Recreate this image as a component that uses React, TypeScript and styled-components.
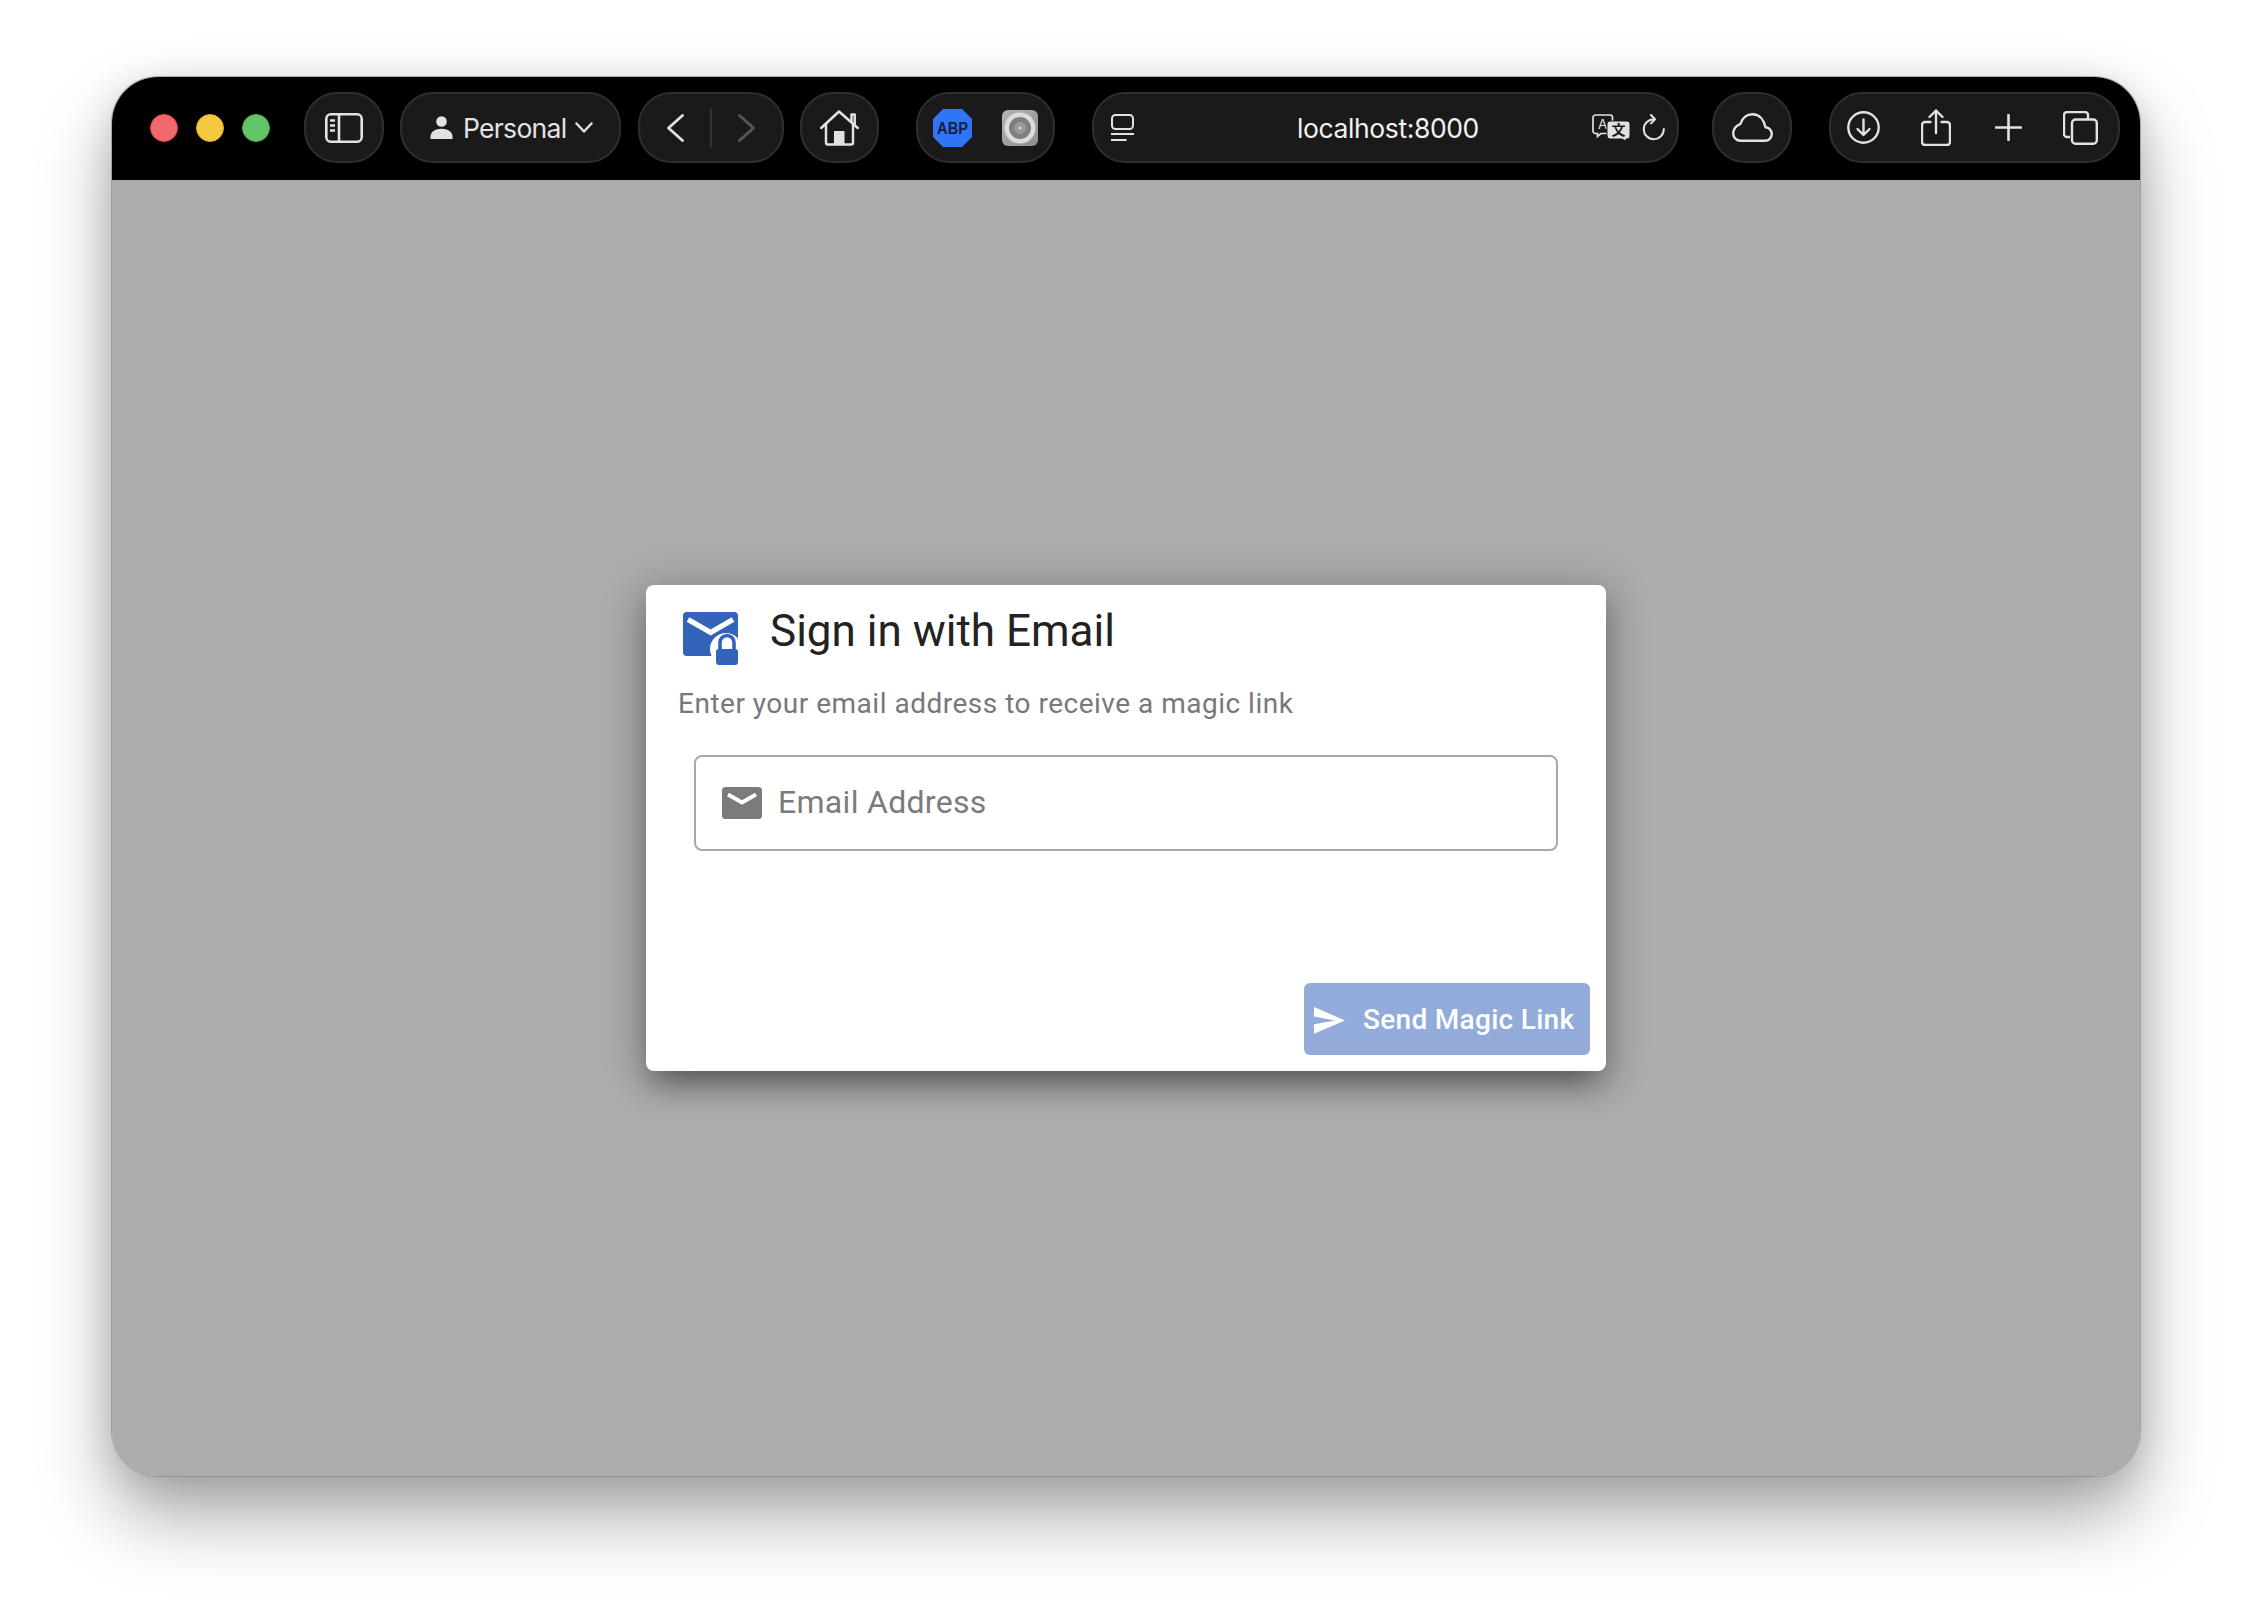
import React from "react";
import styled, { createGlobalStyle } from "styled-components";

const Global = createGlobalStyle`
  html, body { margin: 0; padding: 0; background: #fff; }
  * { box-sizing: border-box; }
`;

const Stage = styled.div`
  width: 2252px;
  height: 1624px;
  padding: 77px 112px 148px;
  background: #fff;
  overflow: hidden;
`;

const Win = styled.div`
  width: 2028px;
  height: 1399px;
  display: flex;
  flex-direction: column;
  border-radius: 46px;
  overflow: hidden;
  box-shadow: 0 0 0 1px rgba(130, 130, 130, 0.6), 0 40px 72px rgba(0, 0, 0, 0.34), 0 4px 36px rgba(0, 0, 0, 0.12);
`;

const Toolbar = styled.header`
  flex: none;
  height: 103px;
  background: #000;
  display: flex;
  align-items: center;
  padding: 0 0 2px 38px;
`;

const Lights = styled.div`
  display: flex;
  gap: 18px;
  margin: 1px 34px 0 0;
`;

const Light = styled.span<{ $fill: string; $edge: string }>`
  width: 28px;
  height: 28px;
  border-radius: 50%;
  background: ${(p) => p.$fill};
  border: 1px solid ${(p) => p.$edge};
`;

const Pill = styled.div<{ $w: number; $before?: number; $pad?: string; $center?: boolean; $gap?: number }>`
  flex: none;
  width: ${(p) => p.$w}px;
  height: 71px;
  margin-left: ${(p) => p.$before ?? 0}px;
  padding: ${(p) => p.$pad ?? "0"};
  display: flex;
  align-items: center;
  gap: ${(p) => p.$gap ?? 0}px;
  justify-content: ${(p) => (p.$center ? "center" : "flex-start")};
  background: #1a1a1a;
  border: 2px solid #2f2f2f;
  border-radius: 33px;
`;

const AddressPill = styled(Pill)`
  display: grid;
  grid-template-columns: 1fr auto 1fr;
`;

const Trailing = styled.div`
  display: flex;
  align-items: center;
  justify-content: flex-end;
  gap: 12px;
`;

const ToolLabel = styled.span`
  font: 400 26.5px/1 "Inter", "Liberation Sans", sans-serif;
  letter-spacing: -0.7px;
  color: #e4e4e4;
  margin: 2px 9px 0 10px;
`;

const Url = styled.span`
  font: 400 26.5px/1 "Inter", "Liberation Sans", sans-serif;
  letter-spacing: -0.4px;
  color: #f2f2f2;
  margin-top: 2px;
`;

const NavDivider = styled.span`
  width: 2px;
  height: 40px;
  margin: 0 26px;
  background: #333;
`;

const Spread = styled.div`
  flex: 1;
  display: flex;
  align-items: center;
  justify-content: space-between;
`;

const ShareSlot = styled.span`
  display: flex;
  margin-right: 3px;
`;

const Content = styled.main`
  flex: 1;
  background: #acacac;
  display: flex;
  align-items: center;
  justify-content: center;
`;

const Card = styled.section`
  width: 960px;
  height: 486px;
  display: flex;
  flex-direction: column;
  background: #fff;
  border-radius: 8px;
  box-shadow: 0 20px 26px -14px rgba(0, 0, 0, 0.32), 0 14px 32px 2px rgba(0, 0, 0, 0.2), 0 4px 44px 6px rgba(0, 0, 0, 0.14);
`;

const TitleRow = styled.div`
  display: flex;
  align-items: flex-start;
  padding: 27px 0 0 37px;
  gap: 31px;
  height: 86px;
`;

const Title = styled.h2`
  margin: -10px 0 0;
  font: 400 44px/58px "Roboto", sans-serif;
  color: #222;
`;

const Subtitle = styled.p`
  margin: 13px 0 0 32px;
  font: 400 28px/40px "Roboto", sans-serif;
  letter-spacing: 0.5px;
  color: #787878;
`;

const InputBox = styled.div`
  margin: 31px 48px 0 48px;
  height: 96px;
  display: flex;
  align-items: center;
  gap: 16px;
  padding-left: 26px;
  border: 2px solid #a8a8a8;
  border-radius: 8px;
`;

const Placeholder = styled.span`
  font: 400 32px/1 "Roboto", sans-serif;
  letter-spacing: 0.3px;
  color: #7b7b7b;
  margin-top: -2px;
`;

const Footer = styled.div`
  margin-top: auto;
  padding: 0 16px 16px 0;
  display: flex;
  justify-content: flex-end;
`;

const SendButton = styled.button`
  width: 286px;
  height: 72px;
  padding: 2px 0 0 10px;
  display: flex;
  align-items: center;
  gap: 18px;
  border: 0;
  border-radius: 6px;
  background: #92abdb;
  color: #fff;
  font: 500 28px/1 "Roboto", sans-serif;
  letter-spacing: 0.3px;
`;

const ic = "#e2e2e2";

const SidebarIcon = () => (
  <svg width="38" height="30" viewBox="0 0 38 30" fill="none" stroke={ic} strokeWidth="2.6">
    <rect x="1.3" y="1.3" width="35.4" height="27.4" rx="4.5" />
    <path d="M14 1.5v27" />
    <path d="M5 7.5h5M5 12.5h5M5 17.5h5" strokeWidth="2.4" />
  </svg>
);

const PersonIcon = () => (
  <svg width="23" height="23" viewBox="0 0 23 23" fill={ic}>
    <circle cx="11.5" cy="5.5" r="5.3" />
    <path d="M0.5 23v-2.5C0.5 16 5 12.7 11.5 12.7S22.5 16 22.5 20.5V23z" />
  </svg>
);

const Chevron = () => (
  <svg width="18" height="11" viewBox="0 0 18 11" fill="none" stroke={ic} strokeWidth="2.4" strokeLinecap="round" strokeLinejoin="round">
    <path d="M1.5 1.5 9 9.5l7.5-8" />
  </svg>
);

const NavArrow = ({ dir, color }: { dir: "l" | "r"; color: string }) => (
  <svg width="17" height="28" viewBox="0 0 17 28" fill="none" stroke={color} strokeWidth="2.8" strokeLinecap="round" strokeLinejoin="round">
    <path d={dir === "l" ? "M15.5 1.5 1.5 14l14 12.5" : "M1.5 1.5 15.5 14 1.5 26.5"} />
  </svg>
);

const HomeIcon = () => (
  <svg width="39" height="36" viewBox="0 0 39 36" fill="none" stroke={ic} strokeWidth="2.5" strokeLinecap="round" strokeLinejoin="round">
    <path d="M1.2 18 19 1.5 37.8 18" />
    <path d="M31.5 12V4.5h3.2V15" />
    <path d="M6 14.5V32.5a2 2 0 0 0 2 2h23a2 2 0 0 0 2-2V14.5" />
    <rect x="14" y="21" width="10.5" height="13.5" fill={ic} stroke="none" />
  </svg>
);

const AbpIcon = () => (
  <svg width="39" height="38" viewBox="0 0 39 38">
    <path d="M10 0h19l10 10v18L29 38H10L0 28V10z" fill="#2f75f5" />
    <text transform="translate(19.5 25) scale(0.86 1)" textAnchor="middle" fontFamily="'Liberation Sans', sans-serif" fontWeight="700" fontSize="17" fill="#14213f">ABP</text>
  </svg>
);

const LensIcon = () => (
  <svg width="36" height="36" viewBox="0 0 36 36">
    <defs>
      <linearGradient id="lensEdge" x1="0" y1="0" x2="1" y2="1">
        <stop offset="0" stopColor="#b4b4b4" />
        <stop offset="1" stopColor="#8e8e8e" />
      </linearGradient>
    </defs>
    <rect width="36" height="36" rx="6" fill="url(#lensEdge)" />
    <circle cx="18" cy="18" r="15.5" fill="#dcdcdc" />
    <circle cx="18" cy="18" r="11" fill="#7f7f7f" />
    <circle cx="18" cy="18" r="6" fill="#9a9a9a" />
    <circle cx="18" cy="18" r="1.5" fill="#d8d8d8" />
  </svg>
);

const ReaderIcon = () => (
  <svg width="23" height="27" viewBox="0 0 23 27" fill="none" stroke={ic} strokeWidth="2">
    <rect x="1" y="1" width="21" height="14" rx="3.5" />
    <path d="M0 20h23" />
    <path d="M0 26h15.5" />
  </svg>
);

const TranslateIcon = () => (
  <svg width="38" height="27" viewBox="0 0 38 27">
    <path d="M3.5 1h14.5a2.5 2.5 0 0 1 2.5 2.5V17a2.5 2.5 0 0 1-2.5 2.5H9L5.5 22.5V19.5h-2A2.5 2.5 0 0 1 1 17V3.5A2.5 2.5 0 0 1 3.5 1z" fill="none" stroke={ic} strokeWidth="1.7" />
    <text x="10.7" y="15" textAnchor="middle" fontFamily="Inter, sans-serif" fontSize="13.5" fill={ic}>A</text>
    <path d="M18 7h17a3 3 0 0 1 3 3v12a3 3 0 0 1-3 3h-1v2l-4-2H18a3 3 0 0 1-3-3V10a3 3 0 0 1 3-3z" fill={ic} stroke="#1a1a1a" strokeWidth="1" />
    <text x="26.5" y="21" textAnchor="middle" fontFamily="'Noto Sans CJK SC', sans-serif" fontSize="14" fontWeight="700" fill="#1a1a1a">文</text>
  </svg>
);

const ReloadIcon = () => (
  <svg width="23" height="27" viewBox="0 0 23 27" fill="none" stroke={ic} strokeWidth="2" strokeLinecap="round" strokeLinejoin="round">
    <path d="M12 5.2A10 10 0 1 0 21.8 15" />
    <path d="M9 1l4 4.2-4 4.2" />
  </svg>
);

const CloudIcon = () => (
  <svg width="41" height="29" viewBox="0 0 41 29" fill="none" stroke={ic} strokeWidth="2.4" strokeLinejoin="round">
    <path d="M8.5 27.8H33a6.8 6.8 0 0 0 6.8-6.8c0-3.6-2.8-6.4-6.3-6.7C32 7 27.5 1.2 20.5 1.2c-6 0-10.5 4-12 9.6C4.5 12.5 1.2 16 1.2 20.5c0 4 3.3 7.3 7.3 7.3z" />
  </svg>
);

const DownloadIcon = () => (
  <svg width="33" height="33" viewBox="0 0 33 33" fill="none" stroke={ic} strokeWidth="2.4" strokeLinecap="round" strokeLinejoin="round">
    <circle cx="16.5" cy="16.5" r="15.2" />
    <path d="M16.5 8.5v15M10.5 18l6 6 6-6" />
  </svg>
);

const ShareIcon = () => (
  <svg width="30" height="37" viewBox="0 0 30 37" fill="none" stroke={ic} strokeWidth="2.4" strokeLinecap="round" strokeLinejoin="round">
    <path d="M9.5 13H4a3 3 0 0 0-3 3v17a3 3 0 0 0 3 3h22a3 3 0 0 0 3-3V16a3 3 0 0 0-3-3h-5.5" />
    <path d="M15 24V1.5M8.5 8 15 1.5 21.5 8" />
  </svg>
);

const PlusIcon = () => (
  <svg width="27" height="27" viewBox="0 0 27 27" fill="none" stroke={ic} strokeWidth="2.6" strokeLinecap="round">
    <path d="M13.5 1v25M1 13.5h25" />
  </svg>
);

const TabsIcon = () => (
  <svg width="35" height="34" viewBox="0 0 35 34" fill="none" stroke={ic} strokeWidth="2.4" strokeLinejoin="round">
    <path d="M7 26H4a3 3 0 0 1-3-3V4a3 3 0 0 1 3-3h18a3 3 0 0 1 3 3v4" />
    <rect x="9" y="8.5" width="24.8" height="24.3" rx="3.5" />
  </svg>
);

const MailLockIcon = () => (
  <svg width="56" height="53" viewBox="0 0 56 53">
    <rect x="0" y="0" width="55" height="44" rx="4" fill="#3264ba" />
    <path d="M5 7.5 27.7 20.5 50 7.5" fill="none" stroke="#fff" strokeWidth="5.4" />
    <circle cx="43" cy="37" r="16" fill="#fff" />
    <rect x="38" y="44" width="18" height="9" fill="#fff" />
    <path d="M37 38v-7.5a7 7 0 0 1 14 0V38" fill="none" stroke="#3264ba" strokeWidth="3.6" />
    <rect x="33" y="37" width="22" height="16" rx="3" fill="#3264ba" />
  </svg>
);

const MailIcon = () => (
  <svg width="40" height="32" viewBox="0 0 40 32">
    <rect width="40" height="32" rx="3.5" fill="#7b7b7b" />
    <path d="M6 7.5 20 15.5 34 7.5" fill="none" stroke="#fff" strokeWidth="4" />
  </svg>
);

const SendIcon = () => (
  <svg width="31" height="27" viewBox="0 0 31 27" fill="#fff">
    <path d="M0 0 31 13.4 0 26.7V17.3L21 13.4 0 9.4z" />
  </svg>
);

export default function App() {
  return (
    <Stage>
      <Global />
      <Win>
        <Toolbar>
          <Lights>
            <Light $fill="#f1696d" $edge="#d9474c" />
            <Light $fill="#f4c83f" $edge="#dca92c" />
            <Light $fill="#62c667" $edge="#4aab50" />
          </Lights>
          <Pill $w={80} $center>
            <SidebarIcon />
          </Pill>
          <Pill $w={221} $before={16} $pad="0 0 0 28px">
            <PersonIcon />
            <ToolLabel>Personal</ToolLabel>
            <Chevron />
          </Pill>
          <Pill $w={146} $before={17} $pad="0 0 0 27px">
            <NavArrow dir="l" color={ic} />
            <NavDivider />
            <NavArrow dir="r" color="#575757" />
          </Pill>
          <Pill $w={79} $before={16} $center>
            <HomeIcon />
          </Pill>
          <Pill $w={139} $before={37} $pad="0 0 0 15px" $gap={30}>
            <AbpIcon />
            <LensIcon />
          </Pill>
          <AddressPill $w={587} $before={37} $pad="0 12px 0 17px">
            <ReaderIcon />
            <Url>localhost:8000</Url>
            <Trailing>
              <TranslateIcon />
              <ReloadIcon />
            </Trailing>
          </AddressPill>
          <Pill $w={80} $before={33} $center>
            <CloudIcon />
          </Pill>
          <Pill $w={291} $before={37} $pad="0 20px 0 16px">
            <Spread>
              <DownloadIcon />
              <ShareSlot>
                <ShareIcon />
              </ShareSlot>
              <PlusIcon />
              <TabsIcon />
            </Spread>
          </Pill>
        </Toolbar>
        <Content>
          <Card>
            <TitleRow>
              <MailLockIcon />
              <Title>Sign in with Email</Title>
            </TitleRow>
            <Subtitle>Enter your email address to receive a magic link</Subtitle>
            <InputBox>
              <MailIcon />
              <Placeholder>Email Address</Placeholder>
            </InputBox>
            <Footer>
              <SendButton>
                <SendIcon />
                Send Magic Link
              </SendButton>
            </Footer>
          </Card>
        </Content>
      </Win>
    </Stage>
  );
}
